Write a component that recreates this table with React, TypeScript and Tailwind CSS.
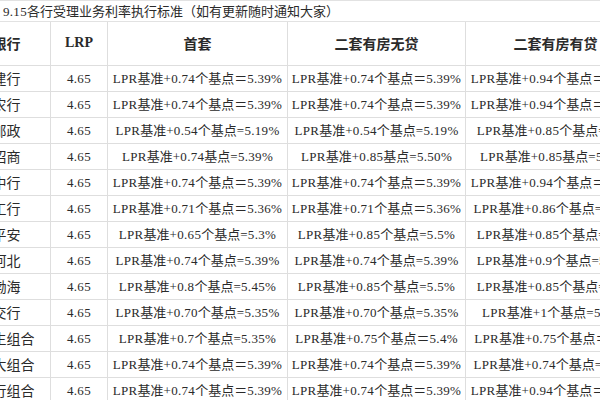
import React from 'react';

type Row = {
    bank: string;
    first: string;
    second: string;
    third: string;
};

const rows: Row[] = [
    { bank: '建行', first: 'LPR基准+0.74个基点＝5.39%', second: 'LPR基准+0.74个基点＝5.39%', third: 'LPR基准+0.94个基点＝5.59%' },
    { bank: '农行', first: 'LPR基准+0.74个基点＝5.39%', second: 'LPR基准+0.74个基点＝5.39%', third: 'LPR基准+0.94个基点＝5.59%' },
    { bank: '邮政', first: 'LPR基准+0.54个基点=5.19%', second: 'LPR基准+0.54个基点=5.19%', third: 'LPR基准+0.85个基点=5.5%' },
    { bank: '招商', first: 'LPR基准+0.74基点=5.39%', second: 'LPR基准+0.85基点=5.50%', third: 'LPR基准+0.85基点=5.50%' },
    { bank: '中行', first: 'LPR基准+0.74个基点＝5.39%', second: 'LPR基准+0.74个基点＝5.39%', third: 'LPR基准+0.94个基点＝5.59%' },
    { bank: '工行', first: 'LPR基准+0.71个基点＝5.36%', second: 'LPR基准+0.71个基点＝5.36%', third: 'LPR基准+0.86个基点=5.51%' },
    { bank: '平安', first: 'LPR基准+0.65个基点=5.3%', second: 'LPR基准+0.85个基点=5.5%', third: 'LPR基准+0.85个基点=5.5%' },
    { bank: '河北', first: 'LPR基准+0.74个基点=5.39%', second: 'LPR基准+0.74个基点=5.39%', third: 'LPR基准+0.9个基点=5.55%' },
    { bank: '渤海', first: 'LPR基准+0.8个基点=5.45%', second: 'LPR基准+0.85个基点=5.5%', third: 'LPR基准+0.85个基点=5.5%' },
    { bank: '交行', first: 'LPR基准+0.70个基点=5.35%', second: 'LPR基准+0.70个基点=5.35%', third: 'LPR基准+1个基点=5.65%' },
    { bank: '民生组合', first: 'LPR基准+0.7个基点=5.35%', second: 'LPR基准+0.75个基点＝5.4%', third: 'LPR基准+0.75个基点＝5.4%' },
    { bank: '光大组合', first: 'LPR基准+0.74个基点＝5.39%', second: 'LPR基准+0.74个基点＝5.39%', third: 'LPR基准+0.74个基点=5.39%' },
    { bank: '农行组合', first: 'LPR基准+0.74个基点＝5.39%', second: 'LPR基准+0.74个基点＝5.39%', third: 'LPR基准+0.94个基点＝5.59%' },
];

// SimSun-like look: latin runs in a serif face, CJK in Noto
function Mixed({ text }: { text: string }) {
    const parts = text.split(/([\x20-\x7e]+)/).filter(Boolean);
    return (
        <>
            {parts.map((p, i) =>
                /^[\x20-\x7e]+$/.test(p) ? (
                    <span key={i} className="font-['Liberation_Serif',serif] tracking-[0.3px]">
                        {p}
                    </span>
                ) : (
                    <span key={i}>{p}</span>
                )
            )}
        </>
    );
}

const cell = 'border border-[#dedede] text-center align-middle whitespace-nowrap leading-none';

export default function App() {
    return (
        <div
            className="w-[600px] h-[400px] overflow-hidden bg-white text-[#2a2a2a]"
            style={{ fontFamily: '"Noto Sans CJK SC", "Liberation Sans", sans-serif' }}
        >
            <div className="h-[22px] border-t border-b border-[#e2e2e2] flex items-center pl-[3px] text-[13px] leading-none">
                <span>
                    <Mixed text="9.15各行受理业务利率执行标准（如有更新随时通知大家）" />
                </span>
            </div>
            <table className="table-fixed border-collapse -ml-[38px] w-[683px] text-[13px]">
                <colgroup>
                    <col className="w-[88px]" />
                    <col className="w-[57px]" />
                    <col className="w-[180px]" />
                    <col className="w-[178px]" />
                    <col className="w-[180px]" />
                </colgroup>
                <thead>
                    <tr className="h-[43px] text-[14px] font-bold">
                        <th className={`${cell} border-t-0`}>银行</th>
                        <th className={`${cell} border-t-0 font-['Liberation_Serif',serif]`}>LRP</th>
                        <th className={`${cell} border-t-0`}>首套</th>
                        <th className={`${cell} border-t-0`}>二套有房无贷</th>
                        <th className={`${cell} border-t-0`}>二套有房有贷</th>
                    </tr>
                </thead>
                <tbody>
                    {rows.map((r) => (
                        <tr key={r.bank} className="h-[26px]">
                            <td className={`${cell} text-[14px]`}>{r.bank}</td>
                            <td className={cell}>
                                <Mixed text="4.65" />
                            </td>
                            <td className={cell}>
                                <Mixed text={r.first} />
                            </td>
                            <td className={cell}>
                                <Mixed text={r.second} />
                            </td>
                            <td className={cell}>
                                <Mixed text={r.third} />
                            </td>
                        </tr>
                    ))}
                </tbody>
            </table>
        </div>
    );
}
